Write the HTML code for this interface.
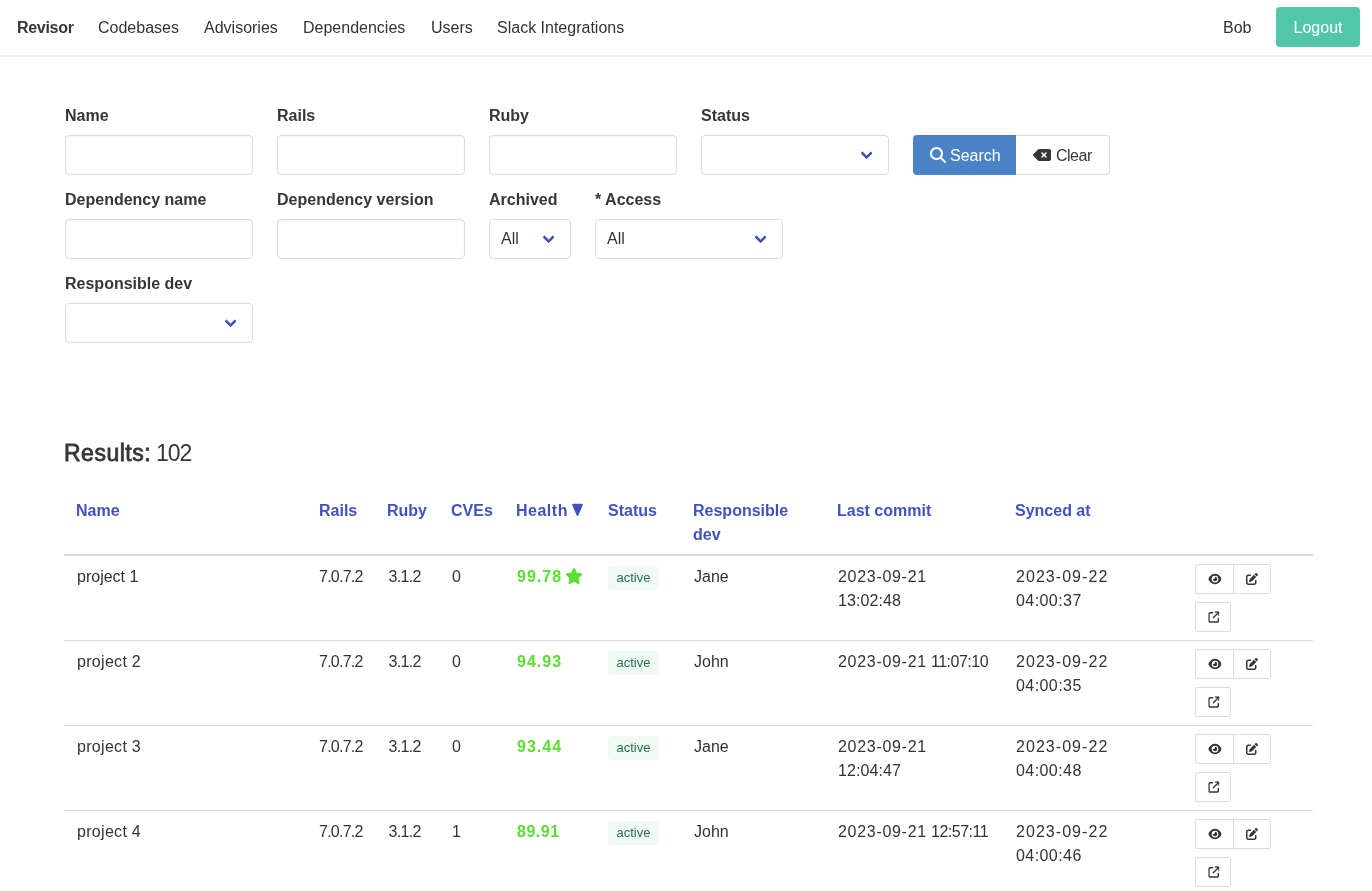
<!DOCTYPE html>
<html><head><meta charset="utf-8">
<style>
*{box-sizing:border-box;margin:0;padding:0}
html,body{width:1372px;height:891px;overflow:hidden;background:#fff}
body{font-family:"Liberation Sans",sans-serif;font-size:16px;line-height:24px;color:#333333;position:relative}
.abs{position:absolute;white-space:nowrap}
.nav{position:absolute;left:0;top:0;width:1372px;height:55px;box-shadow:0 2px 0 0 #f2f2f2}
.nav .t{position:absolute;top:15.5px;color:#333333}
.nav .brand{font-weight:700;color:#363636}
.logout{position:absolute;left:1276px;top:7px;width:84px;height:40px;border-radius:4px;background:#52c6ab;color:#fff;text-align:center;line-height:24px;padding-top:8.5px}
.lbl{position:absolute;font-weight:700;color:#363636;white-space:nowrap}
.inp{position:absolute;height:40px;border:1px solid #dbdbdb;border-radius:4px;box-shadow:inset 0 1px 2px rgba(10,10,10,.05);background:#fff}
.sel{position:absolute;height:40px;border:1px solid #dbdbdb;border-radius:4px;background:#fff;color:#363636}
.sel::after{content:"";box-sizing:border-box;position:absolute;width:8.5px;height:8.5px;border:3px solid #4052c0;border-radius:2px;border-right:0;border-top:0;transform:rotate(-45deg);right:17.75px;top:12.85px}
.sel span{position:absolute;left:11px;top:7px}
.btn-s{position:absolute;left:913px;top:135px;width:103px;height:40px;background:#4a82c6;border-radius:4px 0 0 4px;color:#fff}
.btn-c{position:absolute;left:1016px;top:135px;width:94px;height:40px;border:1px solid #dbdbdb;border-left:0;border-radius:0 4px 4px 0;background:#fff;color:#363636}
.res{position:absolute;left:64px;top:438px;font-size:23px;line-height:30px;color:#363636;white-space:nowrap}
.res b{font-weight:700}
.th{position:absolute;font-weight:700;color:#4052c0;white-space:nowrap}
.hline{position:absolute;left:64px;width:1249px;background:#dbdbdb}
.td{position:absolute;color:#333333;white-space:nowrap}
.g{position:absolute;font-weight:700;color:#5bdd32;white-space:nowrap;letter-spacing:1px}
.tag{position:absolute;height:24px;width:51px;border-radius:4px;background:#effaf5;color:#2e6d4e;font-size:13px;line-height:24px;text-align:center}
.ib{position:absolute;height:30px;border:1px solid #dbdbdb;background:#fff}
.ib svg{position:absolute;left:50%;top:50%;transform:translate(-50%,-50%)}
</style></head><body><div id="wrap" style="position:absolute;left:0;top:0;width:1372px;height:891px;will-change:transform">
<div class="nav">
  <div class="t brand" style="left:17px;letter-spacing:-0.3px">Revisor</div>
  <div class="t" style="left:98px">Codebases</div>
  <div class="t" style="left:204px">Advisories</div>
  <div class="t" style="left:303px">Dependencies</div>
  <div class="t" style="left:431px">Users</div>
  <div class="t" style="left:497px">Slack Integrations</div>
  <div class="t" style="left:1223px">Bob</div>
  <div class="logout">Logout</div>
</div>

<!-- form row 1 -->
<div class="lbl" style="left:65px;top:103.5px">Name</div>
<div class="inp" style="left:65px;top:135px;width:188px"></div>
<div class="lbl" style="left:277px;top:103.5px">Rails</div>
<div class="inp" style="left:277px;top:135px;width:188px"></div>
<div class="lbl" style="left:489px;top:103.5px">Ruby</div>
<div class="inp" style="left:489px;top:135px;width:188px"></div>
<div class="lbl" style="left:701px;top:103.5px">Status</div>
<div class="sel" style="left:701px;top:135px;width:188px"></div>
<div class="btn-s"><svg class="abs" style="left:17px;top:12px" width="16" height="16" viewBox="0 0 512 512"><path fill="#fff" d="M416 208c0 45.9-14.9 88.3-40 122.7L502.6 457.4c12.5 12.5 12.5 32.8 0 45.3s-32.8 12.5-45.3 0L330.7 376c-34.4 25.2-76.8 40-122.7 40C93.1 416 0 322.9 0 208S93.1 0 208 0S416 93.1 416 208zM208 352a144 144 0 1 0 0-288 144 144 0 1 0 0 288z"/></svg><span class="abs" style="left:37px;top:8.5px">Search</span></div>
<div class="btn-c"><svg class="abs" style="left:17px;top:13px" width="18" height="12" viewBox="0 64 576 384"><path fill="#363636" d="M576 128c0-35.3-28.7-64-64-64H205.3c-17 0-33.3 6.7-45.3 18.7L9.4 233.4c-6 6-9.4 14.1-9.4 22.6s3.4 16.6 9.4 22.6L160 429.3c12 12 28.3 18.700 45.3 18.7H512c35.3 0 64-28.7 64-64V128zM271 175c9.4-9.4 24.6-9.4 33.9 0l47 47 47-47c9.4-9.4 24.6-9.4 33.9 0s9.4 24.6 0 33.9l-47 47 47 47c9.4 9.4 9.4 24.6 0 33.9s-24.6 9.4-33.9 0l-47-47-47 47c-9.4 9.4-24.6 9.4-33.9 0s-9.4-24.6 0-33.9l47-47-47-47c-9.4-9.4-9.4-24.6 0-33.9z"/></svg><span class="abs" style="left:40px;top:8px;letter-spacing:-0.5px">Clear</span></div>

<!-- form row 2 -->
<div class="lbl" style="left:65px;top:187.5px">Dependency name</div>
<div class="inp" style="left:65px;top:219px;width:188px"></div>
<div class="lbl" style="left:277px;top:187.5px">Dependency version</div>
<div class="inp" style="left:277px;top:219px;width:188px"></div>
<div class="lbl" style="left:489px;top:187.5px">Archived</div>
<div class="sel" style="left:489px;top:219px;width:82px"><span>All</span></div>
<div class="lbl" style="left:595px;top:187.5px">* Access</div>
<div class="sel" style="left:595px;top:219px;width:188px"><span>All</span></div>

<!-- form row 3 -->
<div class="lbl" style="left:65px;top:271.5px">Responsible dev</div>
<div class="sel" style="left:65px;top:303px;width:188px"></div>

<div class="res" style="-webkit-text-stroke:0.8px #363636;letter-spacing:0.5px">Results:</div><div class="res" style="left:156px;letter-spacing:-1px">102</div>

<!-- table header -->
<div class="th" style="left:76px;top:499px">Name</div>
<div class="th" style="left:319px;top:499px">Rails</div>
<div class="th" style="left:387px;top:499px">Ruby</div>
<div class="th" style="left:451px;top:499px">CVEs</div>
<div class="th" style="left:516px;top:499px;letter-spacing:0.5px">Health</div><svg class="abs" style="left:571px;top:503px" width="13" height="14" viewBox="0 0 13 14"><path d="M2.2 1.8 L10.8 1.8 L6.5 11.8 Z" fill="#4052c0" stroke="#4052c0" stroke-width="2" stroke-linejoin="round"/></svg>
<div class="th" style="left:608px;top:499px">Status</div>
<div class="th" style="left:693px;top:499px">Responsible<br>dev</div>
<div class="th" style="left:837px;top:499px">Last commit</div>
<div class="th" style="left:1015px;top:499px">Synced at</div>
<div class="hline" style="top:554px;height:2px"></div>

<!--ROWS-->
<div class="td" style="left:77px;top:565px;letter-spacing:0px">project 1</div>
<div class="td" style="left:319px;top:565px;letter-spacing:-0.75px">7.0.7.2</div>
<div class="td" style="left:388.5px;top:565px;letter-spacing:-0.7px">3.1.2</div>
<div class="td" style="left:452px;top:565px">0</div>
<div class="g" style="left:517px;top:565px;letter-spacing:1px">99.78</div>
<svg class="abs" style="left:565px;top:568px" width="18" height="16" viewBox="0 0 576 512"><path fill="#5bdd32" d="M316.9 18C311.6 7 300.4 0 288.1 0s-23.4 7-28.8 18L195 150.3 51.4 171.5c-12 1.8-22 10.2-25.7 21.7s-.7 24.2 7.9 32.7L137.8 329 113.2 474.7c-2 12 3 24.2 12.9 31.3s23 8 33.8 2.3l128.3-68.5 128.3 68.5c10.8 5.7 23.9 4.9 33.8-2.3s14.9-19.3 12.9-31.3L438.5 329 542.7 225.9c8.6-8.5 11.7-21.2 7.9-32.7s-13.7-19.9-25.7-21.7L381.2 150.3 316.9 18z"/></svg>
<div class="tag" style="left:608px;top:566px">active</div>
<div class="td" style="left:694px;top:565px">Jane</div>
<div class="td" style="left:838px;top:565px;letter-spacing:0.7px">2023-09-21</div>
<div class="td" style="left:838px;top:589px;letter-spacing:0.10px">13:02:48</div>
<div class="td" style="left:1016px;top:565px;letter-spacing:1.05px">2023-09-22</div>
<div class="td" style="left:1016px;top:589px;letter-spacing:0.43px">04:00:37</div>
<div class="ib eye" style="left:1195px;top:564px;width:39px;border-radius:2px 0 0 2px"><svg width="13.5" height="12" viewBox="0 0 576 512"><path fill="#363636" d="M288 32c-80.8 0-145.5 36.8-192.6 80.6C48.6 156 17.3 208 2.5 243.7c-3.3 7.9-3.3 16.7 0 24.6C17.3 304 48.6 356 95.4 399.4C142.5 443.2 207.2 480 288 480s145.5-36.8 192.6-80.6c46.8-43.5 78.1-95.4 93-131.1c3.3-7.9 3.3-16.7 0-24.6c-14.9-35.7-46.2-87.7-93-131.1C433.5 68.8 368.8 32 288 32zM144 256a144 144 0 1 1 288 0 144 144 0 1 1 -288 0zm144-64c0 35.3-28.7 64-64 64c-7.1 0-13.9-1.2-20.3-3.3c-5.500-1.8-11.9 1.6-11.7 7.4c.3 6.9 1.3 13.8 3.2 20.7c13.7 51.2 66.4 81.600 117.6 67.9s81.6-66.4 67.9-117.6c-11.1-41.5-47.8-69.4-88.6-71.1c-5.8-.2-9.2 6.1-7.4 11.7c2.1 6.4 3.3 13.2 3.3 20.3z"/></svg></div>
<div class="ib edit" style="left:1233px;top:564px;width:38px;border-radius:0 2px 2px 0"><svg width="12" height="12" viewBox="0 0 512 512"><path fill="#363636" d="M471.6 21.7c-21.9-21.9-57.3-21.9-79.2 0L362.3 51.7l97.9 97.9 30.1-30.1c21.9-21.9 21.9-57.3 0-79.2L471.6 21.7zm-299.2 220c-6.1 6.1-10.8 13.6-13.5 21.9l-29.6 88.8c-2.9 8.6-.6 18.1 5.8 24.6s15.9 8.7 24.6 5.8l88.8-29.6c8.2-2.7 15.7-7.4 21.9-13.5L437.7 172.3 339.7 74.3 172.4 241.7zM96 64C43 64 0 107 0 160V416c0 53 43 96 96 96H352c53 0 96-43 96-96V320c0-17.7-14.3-32-32-32s-32 14.3-32 32v96c0 17.7-14.3 32-32 32H96c-17.7 0-32-14.3-32-32V160c0-17.7 14.3-32 32-32h96c17.7 0 32-14.3 32-32s-14.3-32-32-32H96z"/></svg></div>
<div class="ib ext" style="left:1195px;top:602px;width:36px;border-radius:2px"><svg style="margin-left:0.5px" width="11.5" height="11.5" viewBox="0 0 512 512"><path fill="#363636" d="M320 0c-17.7 0-32 14.3-32 32s14.3 32 32 32h82.7L201.4 265.4c-12.5 12.5-12.5 32.8 0 45.3s32.8 12.5 45.3 0L448 109.3V192c0 17.7 14.3 32 32 32s32-14.3 32-32V32c0-17.7-14.3-32-32-32H320zM80 32C35.8 32 0 67.8 0 112V432c0 44.2 35.8 80 80 80H400c44.2 0 80-35.8 80-80V320c0-17.7-14.3-32-32-32s-32 14.3-32 32V432c0 8.8-7.2 16-16 16H80c-8.8 0-16-7.2-16-16V112c0-8.8 7.2-16 16-16H192c17.7 0 32-14.3 32-32s-14.3-32-32-32H80z"/></svg></div>
<div class="hline" style="top:640px;height:1px"></div>
<div class="td" style="left:77px;top:650px;letter-spacing:0.3px">project 2</div>
<div class="td" style="left:319px;top:650px;letter-spacing:-0.75px">7.0.7.2</div>
<div class="td" style="left:388.5px;top:650px;letter-spacing:-0.7px">3.1.2</div>
<div class="td" style="left:452px;top:650px">0</div>
<div class="g" style="left:517px;top:650px;letter-spacing:1px">94.93</div>
<div class="tag" style="left:608px;top:651px">active</div>
<div class="td" style="left:694px;top:650px">John</div>
<div class="td" style="left:838px;top:650px;letter-spacing:0.7px">2023-09-21</div>
<div class="td" style="left:931px;top:650px;letter-spacing:-0.50px">11:07:10</div>
<div class="td" style="left:1016px;top:650px;letter-spacing:1.05px">2023-09-22</div>
<div class="td" style="left:1016px;top:674px;letter-spacing:0.43px">04:00:35</div>
<div class="ib eye" style="left:1195px;top:649px;width:39px;border-radius:2px 0 0 2px"><svg width="13.5" height="12" viewBox="0 0 576 512"><path fill="#363636" d="M288 32c-80.8 0-145.5 36.8-192.6 80.6C48.6 156 17.3 208 2.5 243.7c-3.3 7.9-3.3 16.7 0 24.6C17.3 304 48.6 356 95.4 399.4C142.5 443.2 207.2 480 288 480s145.5-36.8 192.6-80.6c46.8-43.5 78.1-95.4 93-131.1c3.3-7.9 3.3-16.7 0-24.6c-14.9-35.7-46.2-87.7-93-131.1C433.5 68.8 368.8 32 288 32zM144 256a144 144 0 1 1 288 0 144 144 0 1 1 -288 0zm144-64c0 35.3-28.7 64-64 64c-7.1 0-13.9-1.2-20.3-3.3c-5.500-1.8-11.9 1.6-11.7 7.4c.3 6.9 1.3 13.8 3.2 20.7c13.7 51.2 66.4 81.600 117.6 67.9s81.6-66.4 67.9-117.6c-11.1-41.5-47.8-69.4-88.6-71.1c-5.8-.2-9.2 6.1-7.4 11.7c2.1 6.4 3.3 13.2 3.3 20.3z"/></svg></div>
<div class="ib edit" style="left:1233px;top:649px;width:38px;border-radius:0 2px 2px 0"><svg width="12" height="12" viewBox="0 0 512 512"><path fill="#363636" d="M471.6 21.7c-21.9-21.9-57.3-21.9-79.2 0L362.3 51.7l97.9 97.9 30.1-30.1c21.9-21.9 21.9-57.3 0-79.2L471.6 21.7zm-299.2 220c-6.1 6.1-10.8 13.6-13.5 21.9l-29.6 88.8c-2.9 8.6-.6 18.1 5.8 24.6s15.9 8.7 24.6 5.8l88.8-29.6c8.2-2.7 15.7-7.4 21.9-13.5L437.7 172.3 339.7 74.3 172.4 241.7zM96 64C43 64 0 107 0 160V416c0 53 43 96 96 96H352c53 0 96-43 96-96V320c0-17.7-14.3-32-32-32s-32 14.3-32 32v96c0 17.7-14.3 32-32 32H96c-17.7 0-32-14.3-32-32V160c0-17.7 14.3-32 32-32h96c17.7 0 32-14.3 32-32s-14.3-32-32-32H96z"/></svg></div>
<div class="ib ext" style="left:1195px;top:687px;width:36px;border-radius:2px"><svg style="margin-left:0.5px" width="11.5" height="11.5" viewBox="0 0 512 512"><path fill="#363636" d="M320 0c-17.7 0-32 14.3-32 32s14.3 32 32 32h82.7L201.4 265.4c-12.5 12.5-12.5 32.8 0 45.3s32.8 12.5 45.3 0L448 109.3V192c0 17.7 14.3 32 32 32s32-14.3 32-32V32c0-17.7-14.3-32-32-32H320zM80 32C35.8 32 0 67.8 0 112V432c0 44.2 35.8 80 80 80H400c44.2 0 80-35.8 80-80V320c0-17.7-14.3-32-32-32s-32 14.3-32 32V432c0 8.8-7.2 16-16 16H80c-8.8 0-16-7.2-16-16V112c0-8.8 7.2-16 16-16H192c17.7 0 32-14.3 32-32s-14.3-32-32-32H80z"/></svg></div>
<div class="hline" style="top:725px;height:1px"></div>
<div class="td" style="left:77px;top:735px;letter-spacing:0.3px">project 3</div>
<div class="td" style="left:319px;top:735px;letter-spacing:-0.75px">7.0.7.2</div>
<div class="td" style="left:388.5px;top:735px;letter-spacing:-0.7px">3.1.2</div>
<div class="td" style="left:452px;top:735px">0</div>
<div class="g" style="left:517px;top:735px;letter-spacing:1px">93.44</div>
<div class="tag" style="left:608px;top:736px">active</div>
<div class="td" style="left:694px;top:735px">Jane</div>
<div class="td" style="left:838px;top:735px;letter-spacing:0.7px">2023-09-21</div>
<div class="td" style="left:838px;top:759px;letter-spacing:0.10px">12:04:47</div>
<div class="td" style="left:1016px;top:735px;letter-spacing:1.05px">2023-09-22</div>
<div class="td" style="left:1016px;top:759px;letter-spacing:0.43px">04:00:48</div>
<div class="ib eye" style="left:1195px;top:734px;width:39px;border-radius:2px 0 0 2px"><svg width="13.5" height="12" viewBox="0 0 576 512"><path fill="#363636" d="M288 32c-80.8 0-145.5 36.8-192.6 80.6C48.6 156 17.3 208 2.5 243.7c-3.3 7.9-3.3 16.7 0 24.6C17.3 304 48.6 356 95.4 399.4C142.5 443.2 207.2 480 288 480s145.5-36.8 192.6-80.6c46.8-43.5 78.1-95.4 93-131.1c3.3-7.9 3.3-16.7 0-24.6c-14.9-35.7-46.2-87.7-93-131.1C433.5 68.8 368.8 32 288 32zM144 256a144 144 0 1 1 288 0 144 144 0 1 1 -288 0zm144-64c0 35.3-28.7 64-64 64c-7.1 0-13.9-1.2-20.3-3.3c-5.500-1.8-11.9 1.6-11.7 7.4c.3 6.9 1.3 13.8 3.2 20.7c13.7 51.2 66.4 81.600 117.6 67.9s81.6-66.4 67.9-117.6c-11.1-41.5-47.8-69.4-88.6-71.1c-5.8-.2-9.2 6.1-7.4 11.7c2.1 6.4 3.3 13.2 3.3 20.3z"/></svg></div>
<div class="ib edit" style="left:1233px;top:734px;width:38px;border-radius:0 2px 2px 0"><svg width="12" height="12" viewBox="0 0 512 512"><path fill="#363636" d="M471.6 21.7c-21.9-21.9-57.3-21.9-79.2 0L362.3 51.7l97.9 97.9 30.1-30.1c21.9-21.9 21.9-57.3 0-79.2L471.6 21.7zm-299.2 220c-6.1 6.1-10.8 13.6-13.5 21.9l-29.6 88.8c-2.9 8.6-.6 18.1 5.8 24.6s15.9 8.7 24.6 5.8l88.8-29.6c8.2-2.7 15.7-7.4 21.9-13.5L437.7 172.3 339.7 74.3 172.4 241.7zM96 64C43 64 0 107 0 160V416c0 53 43 96 96 96H352c53 0 96-43 96-96V320c0-17.7-14.3-32-32-32s-32 14.3-32 32v96c0 17.7-14.3 32-32 32H96c-17.7 0-32-14.3-32-32V160c0-17.7 14.3-32 32-32h96c17.7 0 32-14.3 32-32s-14.3-32-32-32H96z"/></svg></div>
<div class="ib ext" style="left:1195px;top:772px;width:36px;border-radius:2px"><svg style="margin-left:0.5px" width="11.5" height="11.5" viewBox="0 0 512 512"><path fill="#363636" d="M320 0c-17.7 0-32 14.3-32 32s14.3 32 32 32h82.7L201.4 265.4c-12.5 12.5-12.5 32.8 0 45.3s32.8 12.5 45.3 0L448 109.3V192c0 17.7 14.3 32 32 32s32-14.3 32-32V32c0-17.7-14.3-32-32-32H320zM80 32C35.8 32 0 67.8 0 112V432c0 44.2 35.8 80 80 80H400c44.2 0 80-35.8 80-80V320c0-17.7-14.3-32-32-32s-32 14.3-32 32V432c0 8.8-7.2 16-16 16H80c-8.8 0-16-7.2-16-16V112c0-8.8 7.2-16 16-16H192c17.7 0 32-14.3 32-32s-14.3-32-32-32H80z"/></svg></div>
<div class="hline" style="top:810px;height:1px"></div>
<div class="td" style="left:77px;top:820px;letter-spacing:0.3px">project 4</div>
<div class="td" style="left:319px;top:820px;letter-spacing:-0.75px">7.0.7.2</div>
<div class="td" style="left:388.5px;top:820px;letter-spacing:-0.7px">3.1.2</div>
<div class="td" style="left:452px;top:820px">1</div>
<div class="g" style="left:517px;top:820px;letter-spacing:0.5px">89.91</div>
<div class="tag" style="left:608px;top:821px">active</div>
<div class="td" style="left:694px;top:820px">John</div>
<div class="td" style="left:838px;top:820px;letter-spacing:0.7px">2023-09-21</div>
<div class="td" style="left:931px;top:820px;letter-spacing:-0.50px">12:57:11</div>
<div class="td" style="left:1016px;top:820px;letter-spacing:1.05px">2023-09-22</div>
<div class="td" style="left:1016px;top:844px;letter-spacing:0.43px">04:00:46</div>
<div class="ib eye" style="left:1195px;top:819px;width:39px;border-radius:2px 0 0 2px"><svg width="13.5" height="12" viewBox="0 0 576 512"><path fill="#363636" d="M288 32c-80.8 0-145.5 36.8-192.6 80.6C48.6 156 17.3 208 2.5 243.7c-3.3 7.9-3.3 16.7 0 24.6C17.3 304 48.6 356 95.4 399.4C142.5 443.2 207.2 480 288 480s145.5-36.8 192.6-80.6c46.8-43.5 78.1-95.4 93-131.1c3.3-7.9 3.3-16.7 0-24.6c-14.9-35.7-46.2-87.7-93-131.1C433.5 68.8 368.8 32 288 32zM144 256a144 144 0 1 1 288 0 144 144 0 1 1 -288 0zm144-64c0 35.3-28.7 64-64 64c-7.1 0-13.9-1.2-20.3-3.3c-5.500-1.8-11.9 1.6-11.7 7.4c.3 6.9 1.3 13.8 3.2 20.7c13.7 51.2 66.4 81.600 117.6 67.9s81.6-66.4 67.9-117.6c-11.1-41.5-47.8-69.4-88.6-71.1c-5.8-.2-9.2 6.1-7.4 11.7c2.1 6.4 3.3 13.2 3.3 20.3z"/></svg></div>
<div class="ib edit" style="left:1233px;top:819px;width:38px;border-radius:0 2px 2px 0"><svg width="12" height="12" viewBox="0 0 512 512"><path fill="#363636" d="M471.6 21.7c-21.9-21.9-57.3-21.9-79.2 0L362.3 51.7l97.9 97.9 30.1-30.1c21.9-21.9 21.9-57.3 0-79.2L471.6 21.7zm-299.2 220c-6.1 6.1-10.8 13.6-13.5 21.9l-29.6 88.8c-2.9 8.6-.6 18.1 5.8 24.6s15.9 8.7 24.6 5.8l88.8-29.6c8.2-2.7 15.7-7.4 21.9-13.5L437.7 172.3 339.7 74.3 172.4 241.7zM96 64C43 64 0 107 0 160V416c0 53 43 96 96 96H352c53 0 96-43 96-96V320c0-17.7-14.3-32-32-32s-32 14.3-32 32v96c0 17.7-14.3 32-32 32H96c-17.7 0-32-14.3-32-32V160c0-17.7 14.3-32 32-32h96c17.7 0 32-14.3 32-32s-14.3-32-32-32H96z"/></svg></div>
<div class="ib ext" style="left:1195px;top:857px;width:36px;border-radius:2px"><svg style="margin-left:0.5px" width="11.5" height="11.5" viewBox="0 0 512 512"><path fill="#363636" d="M320 0c-17.7 0-32 14.3-32 32s14.3 32 32 32h82.7L201.4 265.4c-12.5 12.5-12.5 32.8 0 45.3s32.8 12.5 45.3 0L448 109.3V192c0 17.7 14.3 32 32 32s32-14.3 32-32V32c0-17.7-14.3-32-32-32H320zM80 32C35.8 32 0 67.8 0 112V432c0 44.2 35.8 80 80 80H400c44.2 0 80-35.8 80-80V320c0-17.7-14.3-32-32-32s-32 14.3-32 32V432c0 8.8-7.2 16-16 16H80c-8.8 0-16-7.2-16-16V112c0-8.8 7.2-16 16-16H192c17.7 0 32-14.3 32-32s-14.3-32-32-32H80z"/></svg></div>
<!--/ROWS-->
</div></body></html>
